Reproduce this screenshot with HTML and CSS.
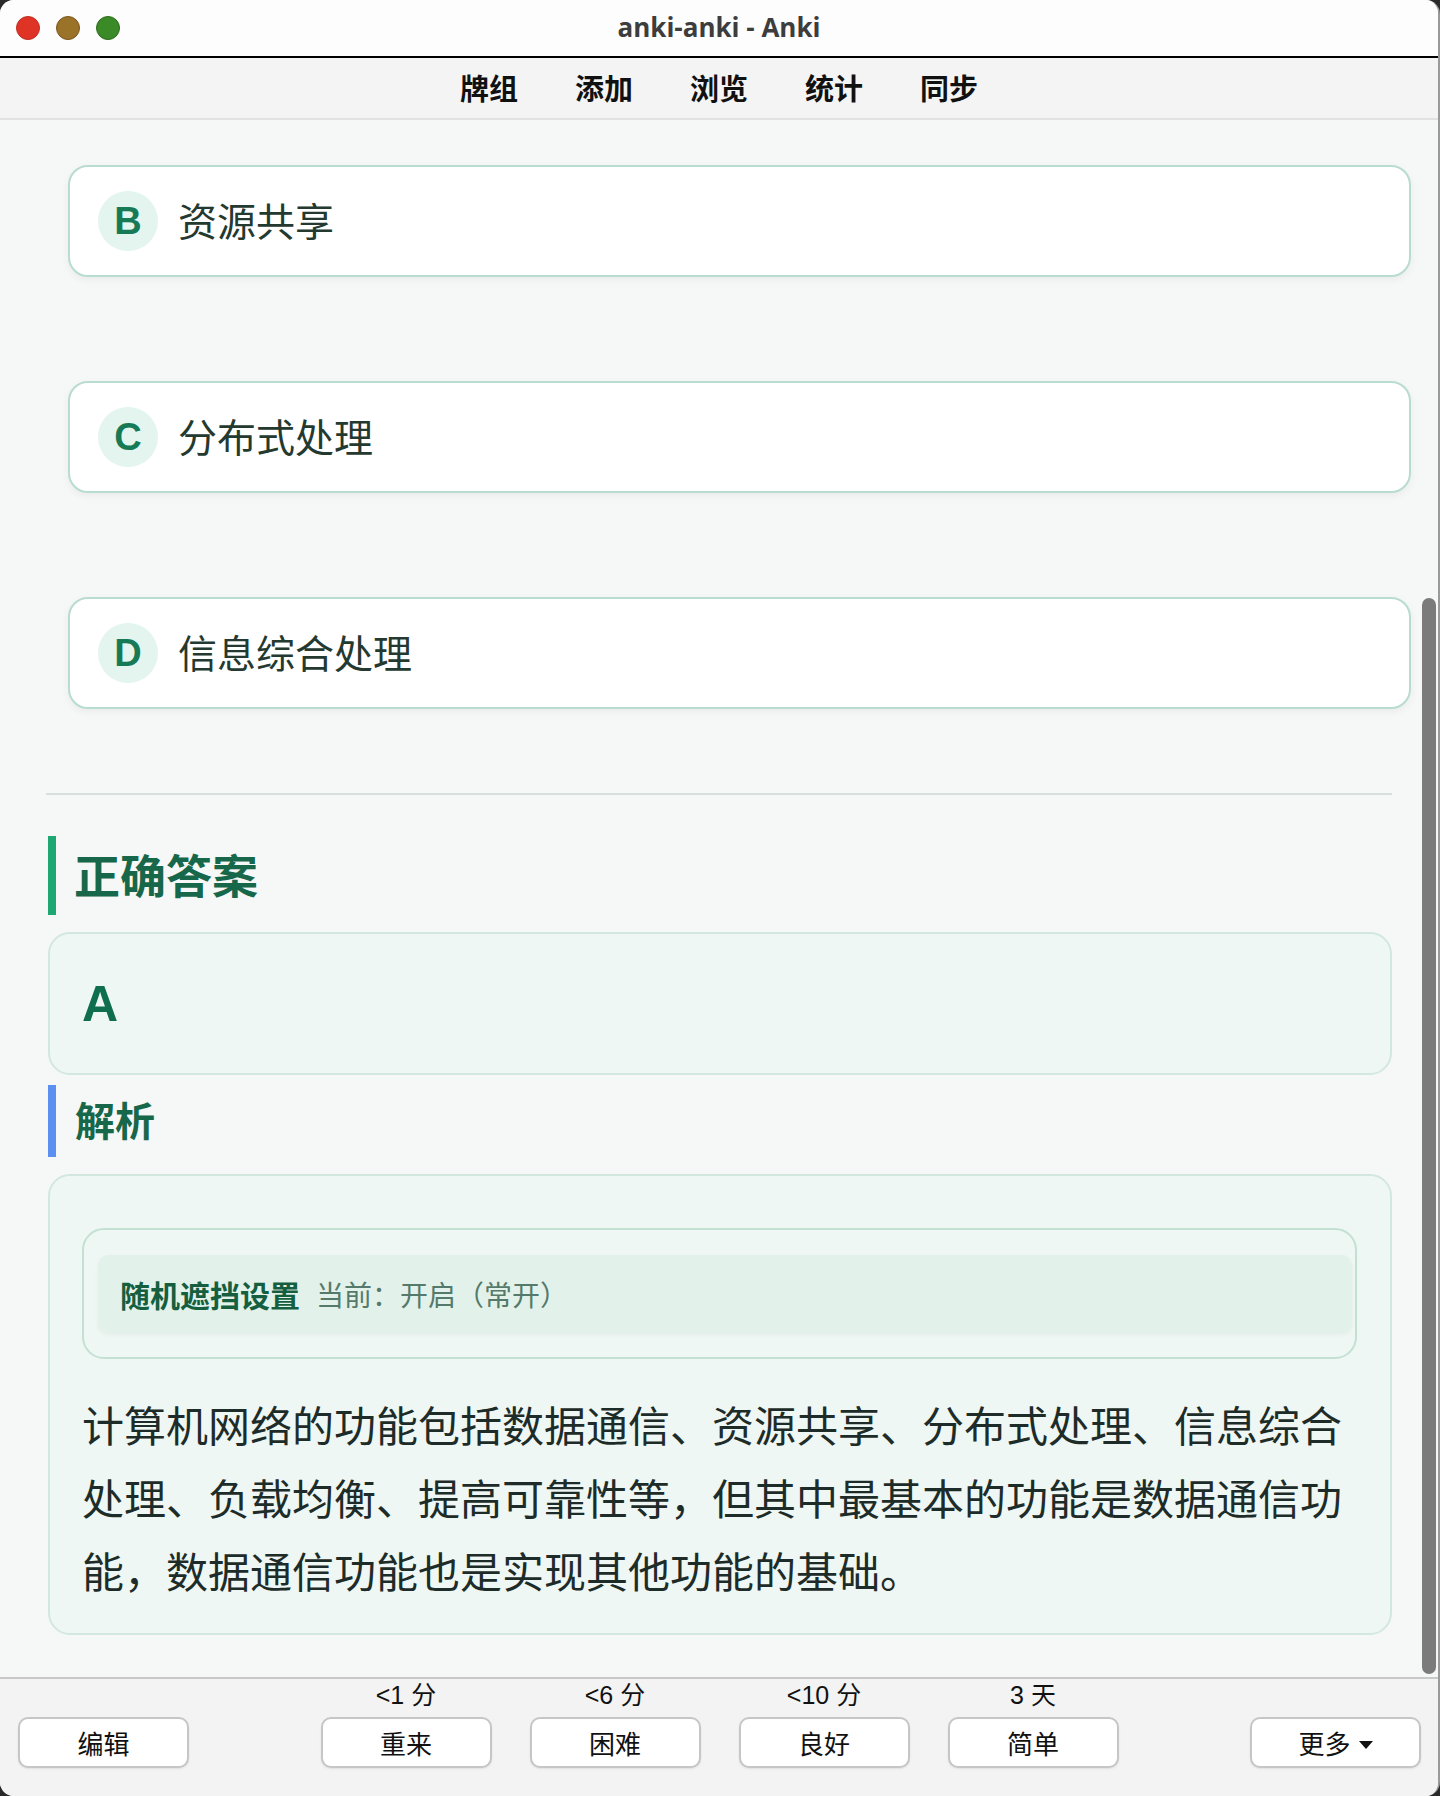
FILE: index.html
```html
<!DOCTYPE html>
<html lang="zh-CN">
    <head>
        <meta charset="UTF-8" />
        <meta name="viewport" content="width=device-width, initial-scale=1.0" />
        <title>anki-anki - Anki</title>
        <link rel="stylesheet" href="styles.css">
    </head>
    <body>
        <div class="window">
            <header class="titlebar">
                <div class="lights">
                    <span class="light red"></span>
                    <span class="light yellow"></span>
                    <span class="light green"></span>
                </div>
                <div class="title">anki-anki - Anki</div>
            </header>
            <nav class="toolbar">
                <a>牌组</a>
                <a>添加</a>
                <a>浏览</a>
                <a>统计</a>
                <a>同步</a>
            </nav>
            <main class="content">
                <div class="options">
                    <div class="option">
                        <span class="letter">B</span>
                        <span class="option-text">资源共享</span>
                    </div>
                    <div class="option">
                        <span class="letter">C</span>
                        <span class="option-text">分布式处理</span>
                    </div>
                    <div class="option">
                        <span class="letter">D</span>
                        <span class="option-text">信息综合处理</span>
                    </div>
                </div>

                <hr class="divider">

                <h2 class="section-title answer-title">正确答案</h2>
                <div class="answer-box">A</div>

                <h2 class="section-title explain-title">解析</h2>
                <div class="explain-box">
                    <div class="mask-setting">
                        <div class="mask-bar">
                            <span class="mask-name">随机遮挡设置</span>
                            <span class="mask-state">当前：开启（常开）</span>
                        </div>
                    </div>
                    <p class="explain-text">计算机网络的功能包括数据通信、资源共享、分布式处理、信息综合处理、负载均衡、提高可靠性等，但其中最基本的功能是数据通信功能，数据通信功能也是实现其他功能的基础。</p>
                </div>

                <div class="scrollbar"></div>
            </main>
            <footer class="answer-bar">
                <div class="col">
                    <span class="due"></span>
                    <button>编辑</button>
                </div>
                <div class="ease">
                    <div class="col">
                        <span class="due">&lt;1 分</span>
                        <button>重来</button>
                    </div>
                    <div class="col">
                        <span class="due">&lt;6 分</span>
                        <button>困难</button>
                    </div>
                    <div class="col">
                        <span class="due">&lt;10 分</span>
                        <button>良好</button>
                    </div>
                    <div class="col">
                        <span class="due">3 天</span>
                        <button>简单</button>
                    </div>
                </div>
                <div class="col">
                    <span class="due"></span>
                    <button>更多<span class="caret"></span></button>
                </div>
            </footer>
        </div>
    </body>
</html>
```

FILE: styles.css
```css
body {
    margin: 0;
    background: #2a2a2a;
    font-family: "Liberation Sans", "Noto Sans CJK SC", sans-serif;
}
.window {
    width: 1440px;
    height: 1796px;
    border-radius: 14px;
    overflow: hidden;
    display: flex;
    flex-direction: column;
    background: #f6f8f7;
    box-sizing: border-box;
    border-right: 2px solid #9a9a9a;
}
.titlebar {
    height: 58px;
    box-sizing: border-box;
    padding-bottom: 3px;
    flex-shrink: 0;
    background: #fdfdfd;
    border-bottom: 2px solid #000;
    display: flex;
    align-items: center;
    justify-content: center;
    position: relative;
}
.lights {
    position: absolute;
    left: 16px;
    top: 16px;
    display: flex;
    gap: 16px;
}
.light {
    width: 24px;
    height: 24px;
    border-radius: 50%;
    box-sizing: border-box;
}
.red {
    background: #df3425;
    border: 1px solid #c02d1f;
}
.yellow {
    background: #9b7328;
    border: 1px solid #7a561c;
}
.green {
    background: #3b8a28;
    border: 1px solid #2c6c1c;
}
.title {
    font-family: "Open Sans", "Liberation Sans", sans-serif;
    font-weight: 700;
    font-size: 26px;
    color: #3d3d3d;
}
.toolbar {
    height: 62px;
    box-sizing: border-box;
    padding-bottom: 3px;
    flex-shrink: 0;
    background: #f4f4f4;
    border-bottom: 2px solid #e2e2e2;
    display: flex;
    justify-content: center;
    align-items: center;
    gap: 57px;
}
.toolbar a {
    font-family: "Noto Sans CJK SC", sans-serif;
    font-weight: 700;
    font-size: 29px;
    color: #111;
}
.content {
    flex: 1;
    position: relative;
    overflow: hidden;
    padding: 45px 46px 0 48px;
}
.options {
    margin: 0 -19px 0 20px;
}
.option {
    height: 112px;
    box-sizing: border-box;
    background: #fff;
    border: 2px solid #b8dccd;
    border-radius: 20px;
    box-shadow: 0 3px 8px rgba(0, 0, 0, 0.05);
    display: flex;
    align-items: center;
    padding-left: 28px;
    margin-bottom: 104px;
}
.option:last-child {
    margin-bottom: 0;
}
.letter {
    width: 60px;
    height: 60px;
    border-radius: 50%;
    background: #e3f5ee;
    color: #167a56;
    font-weight: 700;
    font-size: 38px;
    display: flex;
    align-items: center;
    justify-content: center;
    margin-right: 20px;
}
.option-text {
    font-family: "Noto Sans CJK SC", sans-serif;
    font-size: 39px;
    color: #24392f;
    margin-bottom: 5px;
}
.divider {
    border: none;
    border-top: 2px solid #d6dfdb;
    margin: 84px 0 0 -2px;
}
.section-title {
    margin: 0;
    font-family: "Noto Sans CJK SC", sans-serif;
    font-weight: 700;
    color: #17674a;
    padding-left: 18px;
    display: flex;
    align-items: center;
    box-sizing: border-box;
    padding-bottom: 5px;
}
.answer-title {
    margin-top: 41px;
    height: 79px;
    font-size: 46px;
    border-left: 8px solid #1fa771;
}
.explain-title {
    margin-top: 10px;
    height: 72px;
    font-size: 40px;
    border-left: 8px solid #5b8ff0;
    padding-left: 19px;
}
.answer-box,
.explain-box {
    background: #eef7f3;
    border: 2px solid #d2e8de;
    border-radius: 22px;
    box-sizing: border-box;
}
.answer-box {
    margin-top: 17px;
    height: 143px;
    padding-left: 32px;
    display: flex;
    align-items: center;
    font-weight: 700;
    font-size: 50px;
    color: #0f6e4e;
}
.explain-box {
    margin-top: 17px;
    height: 461px;
    padding: 52px 33px 0 32px;
}
.mask-setting {
    border: 2px solid #c3e1d3;
    border-radius: 22px;
    padding: 25px 3px 24px 14px;
}
.mask-bar {
    height: 78px;
    background: #e2f2ea;
    border-radius: 10px;
    box-shadow: 0 2px 4px rgba(0, 0, 0, 0.04);
    display: flex;
    align-items: center;
    padding-left: 22px;
    font-family: "Noto Sans CJK SC", sans-serif;
}
.mask-name {
    font-weight: 700;
    font-size: 30px;
    color: #155f40;
    margin-right: 16px;
}
.mask-state {
    font-size: 28px;
    color: #557a6b;
}
.explain-text {
    margin: 28px 0 0 0;
    font-family: "Noto Sans CJK SC", sans-serif;
    font-size: 42px;
    line-height: 73px;
    color: #1e2c29;
}
.scrollbar {
    position: absolute;
    right: 2px;
    top: 478px;
    width: 14px;
    height: 1076px;
    border-radius: 7px;
    background: #7b7b7b;
}
.answer-bar {
    height: 117px;
    flex-shrink: 0;
    background: #f3f3f3;
    border-top: 2px solid #c9c9c9;
    display: flex;
    justify-content: space-between;
    padding: 0 17px 0 18px;
}
.ease {
    display: flex;
    gap: 38px;
}
.col {
    display: flex;
    flex-direction: column;
    align-items: center;
}
.due {
    height: 38px;
    line-height: 32px;
    font-size: 25px;
    color: #111;
}
.col button {
    width: 171px;
    height: 51px;
    background: #fff;
    border: 2px solid #c6c6c6;
    border-radius: 10px;
    box-shadow: 0 1px 2px rgba(0, 0, 0, 0.08);
    font-family: "Noto Sans CJK SC", sans-serif;
    font-size: 26px;
    color: #111;
    padding: 0;
    display: flex;
    align-items: center;
    justify-content: center;
}
.caret {
    width: 0;
    height: 0;
    border-left: 7px solid transparent;
    border-right: 7px solid transparent;
    border-top: 8px solid #111;
    margin-left: 8px;
    margin-top: 4px;
}
```
